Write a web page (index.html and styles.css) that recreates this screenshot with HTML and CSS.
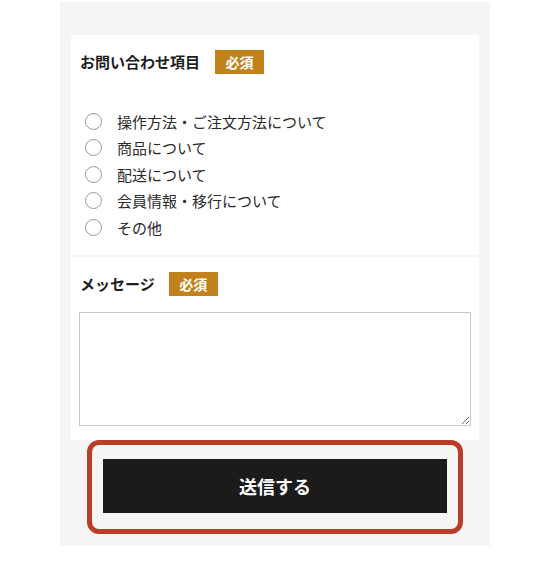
FILE: index.html
```html
<!DOCTYPE html>
<html lang="ja">
<head>
<meta charset="utf-8">
<link rel="stylesheet" href="styles.css">
</head>
<body>
<div class="form">
  <section class="card card-first">
    <div class="head">
      <span class="label">お問い合わせ項目</span>
      <span class="badge">必須</span>
    </div>
    <ul class="options">
      <li><span class="radio"></span><span>操作方法・ご注文方法について</span></li>
      <li><span class="radio"></span><span>商品について</span></li>
      <li><span class="radio"></span><span>配送について</span></li>
      <li><span class="radio"></span><span>会員情報・移行について</span></li>
      <li><span class="radio"></span><span>その他</span></li>
    </ul>
  </section>
  <section class="card card-second">
    <div class="head">
      <span class="label">メッセージ</span>
      <span class="badge badge-tight">必須</span>
    </div>
    <textarea class="message"></textarea>
  </section>
  <div class="actions">
    <div class="btn-wrap">
      <button class="submit">送信する</button>
      <span class="highlight"></span>
    </div>
  </div>
</div>
</body>
</html>
```

FILE: styles.css
```css
* { box-sizing: border-box; }
html, body {
  margin: 0;
  padding: 0;
  background: #ffffff;
  font-family: "Noto Sans CJK JP", "Noto Sans", sans-serif;
}
.form {
  width: 430px;
  margin: 2px 0 0 60px;
  padding: 33px 11px 33px 11px;
  background: #f6f4f4;
}
.card {
  background: #ffffff;
}
.card-first {
  height: 220px;
  padding: 15px 9px 0 9px;
}
.card-second {
  margin-top: 2px;
  height: 183px;
  padding: 15px 8px 0 8px;
}
.head {
  display: flex;
  align-items: center;
  height: 24px;
}
.card-second .head { padding-left: 1px; }
.label {
  font-size: 15px;
  font-weight: 700;
  color: #1e1e1e;
  line-height: 24px;
}
.badge {
  margin-left: 15px;
  width: 49px;
  height: 24px;
  background: #c1821b;
  color: #ffffff;
  font-size: 14px;
  font-weight: 700;
  line-height: 24px;
  text-align: center;
}
.badge-tight { margin-left: 14px; }
.options {
  list-style: none;
  margin: 34px 0 0 6px;
  padding: 0;
}
.options li {
  display: flex;
  align-items: center;
  height: 26.5px;
  font-size: 15px;
  color: #2b2b2b;
}
.radio {
  width: 17px;
  height: 17px;
  border: 1px solid #999999;
  border-radius: 50%;
  margin-left: -1px;
  margin-right: 15px;
  background: #fff;
  flex: none;
}
.message {
  display: block;
  width: 392px;
  height: 114px;
  margin-top: 16px;
  border: 1px solid #c8c8c8;
  border-radius: 0;
  padding: 4px;
  resize: vertical;
  font-family: inherit;
}
.actions {
  display: flex;
  justify-content: center;
  padding-top: 19px;
}
.btn-wrap {
  position: relative;
  width: 344px;
  height: 54px;
}
.submit {
  display: block;
  width: 100%;
  height: 100%;
  border: 0;
  background: #1b1b1b;
  color: #ffffff;
  font-family: inherit;
  font-size: 18px;
  font-weight: 700;
  cursor: pointer;
}
.highlight {
  position: absolute;
  left: -16px;
  right: -16px;
  top: -19px;
  bottom: -21px;
  border: 5px solid #b93d27;
  border-radius: 12px;
  pointer-events: none;
}
```
